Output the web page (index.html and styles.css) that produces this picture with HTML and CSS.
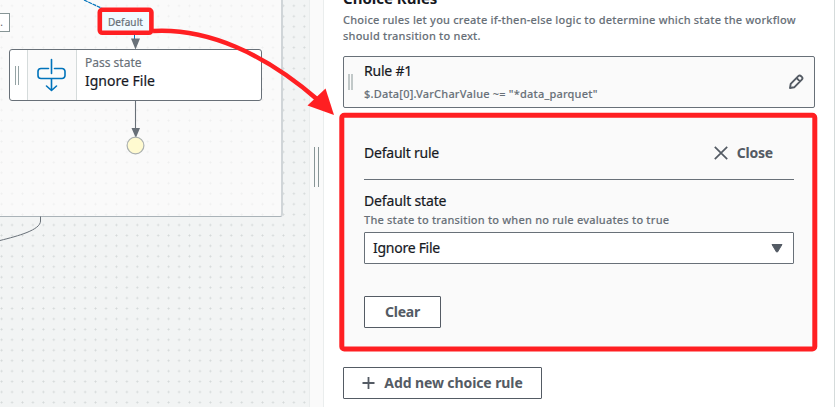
FILE: index.html
```html
<!DOCTYPE html>
<html lang="en">
<head>
<meta charset="utf-8">
<title>Workflow Studio</title>
<link rel="stylesheet" href="styles.css">
</head>
<body>
<main class="studio">
  <section class="canvas">
    <div class="dots"></div>
    <div class="group"></div>
    <svg class="edges" width="310" height="407" viewBox="0 0 310 407" fill="none">
      <path d="M84 0L113 13.500" stroke="#0073bb" stroke-width="1.200" stroke-dasharray="4 .7"/>
      <path d="M134.500 34v6" stroke="#0073bb"/>
      <path d="M135.500 101v30" stroke="#687078" stroke-width="1.100"/>
      <path d="M131 38.500h9l-4.500 11zM131.500 128h8.500l-4.200 10z" fill="#687078"/>
      <circle cx="135.500" cy="145.500" r="8.400" fill="#fffad0" stroke="#aab0b0" stroke-width="1.200"/>
      <path d="M40.500 216.500v4.500C40.500 230 18 236 0 240.500" stroke="#687078"/>
    </svg>
    <div class="cut-label">.</div>
    <div class="edge-label">Default</div>
    <article class="node">
      <div class="node-grip"><i class="grip"></i></div>
      <div class="node-icon">
        <svg width="30" height="34" viewBox="0 0 30 34" fill="none" stroke="#0073bb" stroke-width="1.600" stroke-linecap="round" stroke-linejoin="round">
          <path d="M14.500 1.500v14M11.500 10.500H4a3 3 0 0 0-3 3v4a3 3 0 0 0 3 3h21a3 3 0 0 0 3-3v-4a3 3 0 0 0-3-3h-7.500M14.500 21v11M9.500 28l5 4.500 5-4.500"/>
        </svg>
      </div>
      <div class="node-text">
        <span class="node-type">Pass state</span>
        <span class="node-name">Ignore File</span>
      </div>
    </article>
  </section>
  <div class="splitter"><i class="splitter-grip"></i></div>
  <section class="panel">
    <h2 class="title">Choice Rules</h2>
    <p class="intro"><span class="intro-a">Choice rules let you create if-then-else logic to determine which state the workflow</span><br><span class="intro-b">should transition to next.</span></p>
    <article class="rule">
      <i class="rule-grip"></i>
      <div class="rule-text">
        <span class="rule-name">Rule #1</span>
        <span class="rule-expr">$.Data[0].VarCharValue ~= "*data_parquet"</span>
      </div>
      <svg class="pencil" width="16" height="16" viewBox="0 0 16 16" fill="none" stroke="#545b64" stroke-width="1.900" stroke-linejoin="round">
        <path d="M2 14l.7-4.200L10.300 2.200a2 2 0 0 1 2.800 0l.7.7a2 2 0 0 1 0 2.800L6.200 13.300zM8.700 4.200l3.200 3.200"/>
      </svg>
    </article>
    <article class="default-rule">
      <header class="default-head">
        <span class="default-title">Default rule</span>
        <button class="close">
          <svg width="14" height="14" viewBox="0 0 14 14" stroke="#545b64" stroke-width="1.700"><path d="M.8.8l12.400 12.400M13.200.8L.8 13.200"/></svg>
          <span class="close-text">Close</span>
        </button>
      </header>
      <span class="field-label">Default state</span>
      <span class="field-hint">The state to transition to when no rule evaluates to true</span>
      <div class="select">
        <span class="select-text">Ignore File</span>
        <svg width="12" height="9" viewBox="0 0 12 9"><path d="M1 .5h10L6.500 8h-1z" fill="#545b64" stroke="#545b64" stroke-linejoin="round"/></svg>
      </div>
      <button class="btn clear"><span class="clear-text">Clear</span></button>
    </article>
    <button class="btn add">
      <svg width="13" height="12" viewBox="0 0 13 12" stroke="#545b64" stroke-width="1.800"><path d="M.5 6h12M6.500 0v12"/></svg>
      <span class="add-text">Add new choice rule</span>
    </button>
  </section>
  <svg class="callout" width="837" height="407" viewBox="0 0 837 407" fill="none" stroke="#ff1f22">
    <rect x="99.800" y="9.800" width="51.600" height="23" rx="2.500" stroke-width="4.600"/>
    <path d="M153 31C207 28 264 53 318 100" stroke-width="4.600"/>
    <path d="M325.500 88.500l8.500 26.500-26.500-9.500z" fill="#ff1f22" stroke="none"/>
    <rect x="341.800" y="115.200" width="473" height="233.800" rx="2.500" stroke-width="5"/>
  </svg>
</main>
</body>
</html>
```
FILE: styles.css
```css
* { box-sizing: border-box; }
body { margin: 0; font-family: "Noto Sans", sans-serif; color: #16191f; }
button { font: inherit; margin: 0; cursor: pointer; }
.studio { position: relative; display: flex; width: 837px; height: 407px; overflow: hidden; background: #fff; }
.canvas { position: relative; flex: 0 0 309px; overflow: hidden; background: #f2f4f4; }
.group { position: absolute; left: -10px; top: -10px; width: 293px; height: 227px; background: rgba(255, 254, 254, .62); border: 1px solid #aab3b8; border-right: 2px solid #d0d5d8; border-radius: 0 0 3px 0; }
.dots { position: absolute; inset: 0; background-image: radial-gradient(circle, rgba(100, 115, 115, .22) 0 .7px, transparent 1.300px); background-size: 10.450px 10.450px; background-position: -3.600px .6px; }
.edges { position: absolute; left: 0; top: 0; }
.cut-label { position: absolute; left: -20px; top: 13px; width: 30px; height: 19px; padding-right: 6px; border: 1px solid #879596; background: #fff; color: #545b64; font-size: 10px; line-height: 17px; text-align: right; }
.edge-label { position: absolute; left: 102px; top: 12px; width: 47px; height: 20px; background: #f1faff; color: #687078; font-size: 10px; line-height: 20px; text-align: center; letter-spacing: .1px; -webkit-text-stroke: .2px; }
.node { position: absolute; left: 9px; top: 49px; display: flex; width: 253px; height: 52px; background: #fff; border: 1px solid #687078; border-radius: 3px; }
.node-grip { display: flex; align-items: center; justify-content: center; width: 17px; padding-right: 3px; }
.grip { width: 4px; height: 19px; border: solid #95a3a4; border-width: 0 1px; }
.node-icon { display: flex; align-items: center; justify-content: center; width: 50px; background: #fafafa; border: solid #d5dbdb; border-width: 0 1px; }
.node-text { display: flex; flex-direction: column; padding: 4px 0 0 8px; }
.node-type { color: #687078; font-size: 12px; line-height: 18px; -webkit-text-stroke: .15px; }
.node-name { font-size: 14px; line-height: 18px; -webkit-text-stroke: .2px; }
.splitter { flex: 0 0 15px; display: flex; justify-content: center; background: #fafafa; border: solid #eaeded; border-width: 0 1px; }
.splitter-grip { width: 5px; height: 40px; margin-top: 147px; border: solid #879596; border-width: 0 1px; }
.panel { flex: 0 0 511px; padding: 0 19px; border-right: 1px solid #d5dbdb; overflow: hidden; }
.title { margin: -12px 0 0; font-size: 15px; line-height: 20px; font-weight: 700; white-space: nowrap; }
.intro { margin: 4px 0 0; color: #687078; font-size: 11px; line-height: 16px; font-weight: 500; letter-spacing: .21px; white-space: nowrap; -webkit-text-stroke: .1px; }
.rule { display: flex; align-items: center; width: 472px; height: 52px; margin-top: 12px; padding: 0 10px 0 4px; background: #fafafa; border: 1px solid #687078; border-radius: 2px; }
.rule-grip { width: 5px; height: 16px; border: solid #c1c8c8; border-width: 0 2px; }
.rule-text { flex: 1; display: flex; flex-direction: column; padding: 1px 0 0 11px; }
.rule-name { font-size: 14px; line-height: 22px; letter-spacing: -.2px; -webkit-text-stroke: .2px; }
.rule-expr { color: #687078; font-size: 11px; line-height: 23px; font-weight: 500; letter-spacing: .2px; -webkit-text-stroke: .1px; }
.default-rule { width: 472px; height: 232px; margin-top: 8px; padding: 16px 21px 0; background: #fafafa; display: flex; flex-direction: column; align-items: flex-start; }
.default-head { display: flex; align-items: center; justify-content: space-between; width: 430px; height: 48px; padding-right: 21px; padding-bottom: 5px; border-bottom: 1px solid #687078; font-size: 14px; }
.default-title { letter-spacing: -.22px; padding-bottom: 2px; -webkit-text-stroke: .2px; }
.close { display: flex; align-items: center; gap: 9px; padding: 0; border: 0; background: none; color: #545b64; font-weight: 700; font-size: 14px; }
.close-text { letter-spacing: -.2px; padding-bottom: 2px; }
.field-label { margin-top: 12px; font-size: 14px; line-height: 18px; letter-spacing: -.15px; -webkit-text-stroke: .2px; }
.field-hint { margin-top: 2px; color: #687078; font-size: 11px; line-height: 16px; font-weight: 500; letter-spacing: .2px; -webkit-text-stroke: .1px; }
.select { display: flex; align-items: center; justify-content: space-between; width: 430px; height: 32px; margin-top: 4px; padding: 0 10px 0 8px; background: #fff; border: 1px solid #687078; border-radius: 1px; font-size: 14px; }
.select-text { letter-spacing: -.27px; padding-bottom: 2px; -webkit-text-stroke: .2px; }
.btn { display: flex; align-items: center; justify-content: center; height: 32px; padding: 0; border: 1px solid #545b64; border-radius: 1px; background: #fff; color: #545b64; font-size: 14px; font-weight: 700; }
.clear { width: 77px; margin-top: 32px; }
.clear-text { letter-spacing: -.2px; padding-bottom: 2px; }
.add { width: 199px; margin-top: 19px; gap: 9px; }
.add-text { letter-spacing: -.1px; padding-bottom: 2px; }
.callout { position: absolute; left: 0; top: 0; pointer-events: none; }
span { white-space: nowrap; }
```
